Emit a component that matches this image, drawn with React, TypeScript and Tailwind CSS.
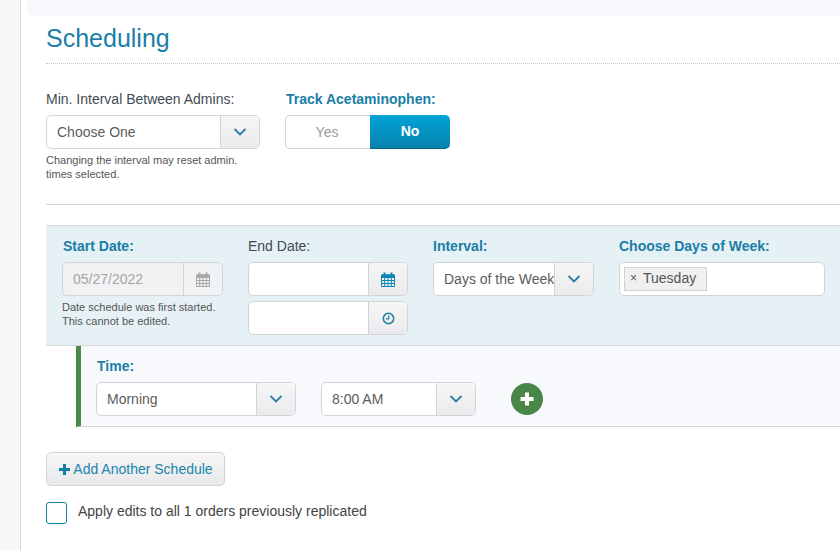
import type { ReactNode } from "react";

function Chevron() {
  return (
    <svg width="14" height="8" viewBox="0 0 14 8" fill="none" stroke="#2a7fa5" strokeWidth="1.8">
      <path d="M1.5 1 L7 6.5 L12.5 1" />
    </svg>
  );
}

function CalendarIcon({ color }: { color: string }) {
  return (
    <svg width="14" height="15" viewBox="0 0 14 15" fill="none" stroke={color} strokeWidth="1">
      <path d="M0.5 3h13v11.5H0.5z" />
      <path d="M0.5 3h13v2.5H0.5z" fill={color} />
      <path d="M0.5 8.5h13M0.5 11.5h13M3.7 5.5v9M7 5.5v9M10.3 5.5v9" />
      <path d="M3.5 0.5v3.5M10.5 0.5v3.5" strokeWidth="2" />
    </svg>
  );
}

function ClockIcon() {
  return (
    <svg width="13" height="13" viewBox="0 0 13 13" fill="none" stroke="#2a7fa5">
      <circle cx="6.5" cy="6.5" r="5.2" strokeWidth="1.6" />
      <path d="M6.8 3.2v3.6H4" strokeWidth="1.2" />
    </svg>
  );
}

function Addon({ children }: { children: ReactNode }) {
  return (
    <div className="w-[39px] shrink-0 flex items-center justify-center border-l border-[#d0d3d6] bg-gradient-to-b from-[#f6f6f7] to-[#ebebed]">
      {children}
    </div>
  );
}

function SelectBox({ value, className }: { value: string; className: string }) {
  return (
    <div className={`${className} h-[34px] flex bg-white border border-[#d2d5d8] rounded-[5px] overflow-hidden`}>
      <div className="flex-1 min-w-0 pl-[10px] leading-[32px] text-[14px] text-[#5c5c5c] whitespace-nowrap overflow-hidden">{value}</div>
      <Addon>
        <Chevron />
      </Addon>
    </div>
  );
}

function DateBox({ children, value, disabled }: { children: ReactNode; value?: string; disabled?: boolean }) {
  return (
    <div className={`w-full h-[34px] flex border border-[#d2d5d8] rounded-[5px] overflow-hidden ${disabled ? "bg-[#f1f2f3]" : "bg-white"}`}>
      <div className="flex-1 pl-[10px] leading-[32px] text-[14px] text-[#a3a5a7]">{value}</div>
      {disabled ? (
        <div className="w-[39px] flex items-center justify-center border-l border-[#d0d3d6]">{children}</div>
      ) : (
        <Addon>{children}</Addon>
      )}
    </div>
  );
}

function BlueLabel({ children }: { children: ReactNode }) {
  return <div className="ml-[1px] text-[14px] leading-[18px] font-bold text-[#1a7fa6]">{children}</div>;
}

export default function App() {
  return (
    <div className="w-[840px] h-[550px] overflow-hidden flex bg-white text-[#444]" style={{ fontFamily: '"Liberation Sans", Arial, sans-serif' }}>
      <div className="w-[21px] shrink-0 bg-[#f7f7f8] border-r border-[#d5d6d8]" />
      <div className="flex-1 min-w-0">
        <div className="h-[16px] ml-[6px] bg-[#f6f8fb] rounded-bl-[6px]" />
        <div className="pl-[25px]">
          <div className="h-[48px] border-b border-dotted border-[#c4c6c8]">
            <h1 className="pt-[6px] text-[25px] leading-[32px] text-[#1b7fa8]">Scheduling</h1>
          </div>

          <div className="flex gap-[25px] pt-[26px] h-[141px] border-b border-[#d4d5d6]">
            <div className="w-[214px]">
              <div className="text-[14px] leading-[18px] text-[#3f4a52] whitespace-nowrap">Min. Interval Between Admins:</div>
              <SelectBox value="Choose One" className="w-[214px] mt-[7px]" />
              <p className="mt-[4px] text-[11px] leading-[14px] text-[#555] whitespace-nowrap">
                Changing the interval may reset admin.
                <br />
                times selected.
              </p>
            </div>
            <div>
              <BlueLabel>Track Acetaminophen:</BlueLabel>
              <div className="mt-[7px] flex w-[165px] h-[34px]">
                <div className="w-[85px] pr-[2px] border border-r-0 border-[#d2d5d8] rounded-l-[5px] text-center leading-[32px] text-[14px] text-[#9a9c9e]">Yes</div>
                <div className="w-[80px] rounded-r-[5px] bg-gradient-to-b from-[#02a3d8] to-[#0782ac] border-b border-[#06688a] text-center leading-[33px] text-[14px] font-bold text-white">No</div>
              </div>
            </div>
          </div>

          <div className="mt-[20px] h-[121px] pl-[16px] pt-[11px] flex gap-[25px] bg-[#e6f1f6] border-y border-[#d6dadc]">
            <div className="w-[161px]">
              <BlueLabel>Start Date:</BlueLabel>
              <div className="mt-[7px]">
                <DateBox value="05/27/2022" disabled>
                  <CalendarIcon color="#a6a8aa" />
                </DateBox>
              </div>
              <p className="mt-[4px] text-[11px] leading-[14px] text-[#555] whitespace-nowrap">
                Date schedule was first started.
                <br />
                This cannot be edited.
              </p>
            </div>
            <div className="w-[160px]">
              <div className="text-[14px] leading-[18px] text-[#3f4a52]">End Date:</div>
              <div className="mt-[7px] flex flex-col gap-[5px]">
                <DateBox>
                  <CalendarIcon color="#0f86b3" />
                </DateBox>
                <DateBox>
                  <ClockIcon />
                </DateBox>
              </div>
            </div>
            <div className="w-[161px]">
              <div className="text-[14px] leading-[18px] font-bold text-[#1a7fa6]">Interval:</div>
              <SelectBox value="Days of the Week" className="w-[161px] mt-[7px]" />
            </div>
            <div className="w-[206px]">
              <div className="text-[14px] leading-[18px] font-bold text-[#1a7fa6]">Choose Days of Week:</div>
              <div className="mt-[7px] w-[206px] h-[34px] bg-white border border-[#d2d5d8] rounded-[5px] pl-[4px] pt-[4px]">
                <div className="w-[83px] h-[24px] flex items-center bg-[#f0f0f1] border border-[#d0d2d4] pl-[5px] pb-[2px] text-[14px] text-[#555]">
                  <span className="text-[12px] w-[13px]">×</span>
                  <span>Tuesday</span>
                </div>
              </div>
            </div>
          </div>

          <div className="ml-[30px] h-[81px] pl-[15px] pt-[11px] bg-[#f8f9fc] border-l-[5px] border-l-[#4a8b4c] border-b border-b-[#d6d8da]">
            <BlueLabel>Time:</BlueLabel>
            <div className="mt-[7px] flex items-center">
              <SelectBox value="Morning" className="w-[200px]" />
              <SelectBox value="8:00 AM" className="w-[155px] ml-[25px]" />
              <div className="ml-[35px] w-[32px] h-[32px] rounded-full bg-[#488748] flex items-center justify-center">
                <svg width="14" height="14" viewBox="0 0 14 14" fill="#fff">
                  <path d="M5 0.5h4v4.5h4.5v4H9v4.5H5V9H0.5V5H5z" />
                </svg>
              </div>
            </div>
          </div>

          <button className="mt-[25px] w-[179px] h-[34px] flex items-center justify-center gap-[3px] pl-[1px] border border-[#d2d5d8] rounded-[5px] bg-gradient-to-b from-[#f6f6f7] to-[#e9e9eb] text-[14px] text-[#1a85ad]">
            <svg width="11" height="11" viewBox="0 0 11 11" fill="#127fa8">
              <path d="M4 0h3v4h4v3H7v4H4V7H0V4h4z" />
            </svg>
            Add Another Schedule
          </button>

          <div className="mt-[15px] flex items-center gap-[11px]">
            <div className="w-[21px] h-[22px] border border-[#127fa8] rounded-[3px] bg-white" />
            <span className="pb-[2px] text-[14px] text-[#444]">Apply edits to all 1 orders previously replicated</span>
          </div>
        </div>
      </div>
    </div>
  );
}
